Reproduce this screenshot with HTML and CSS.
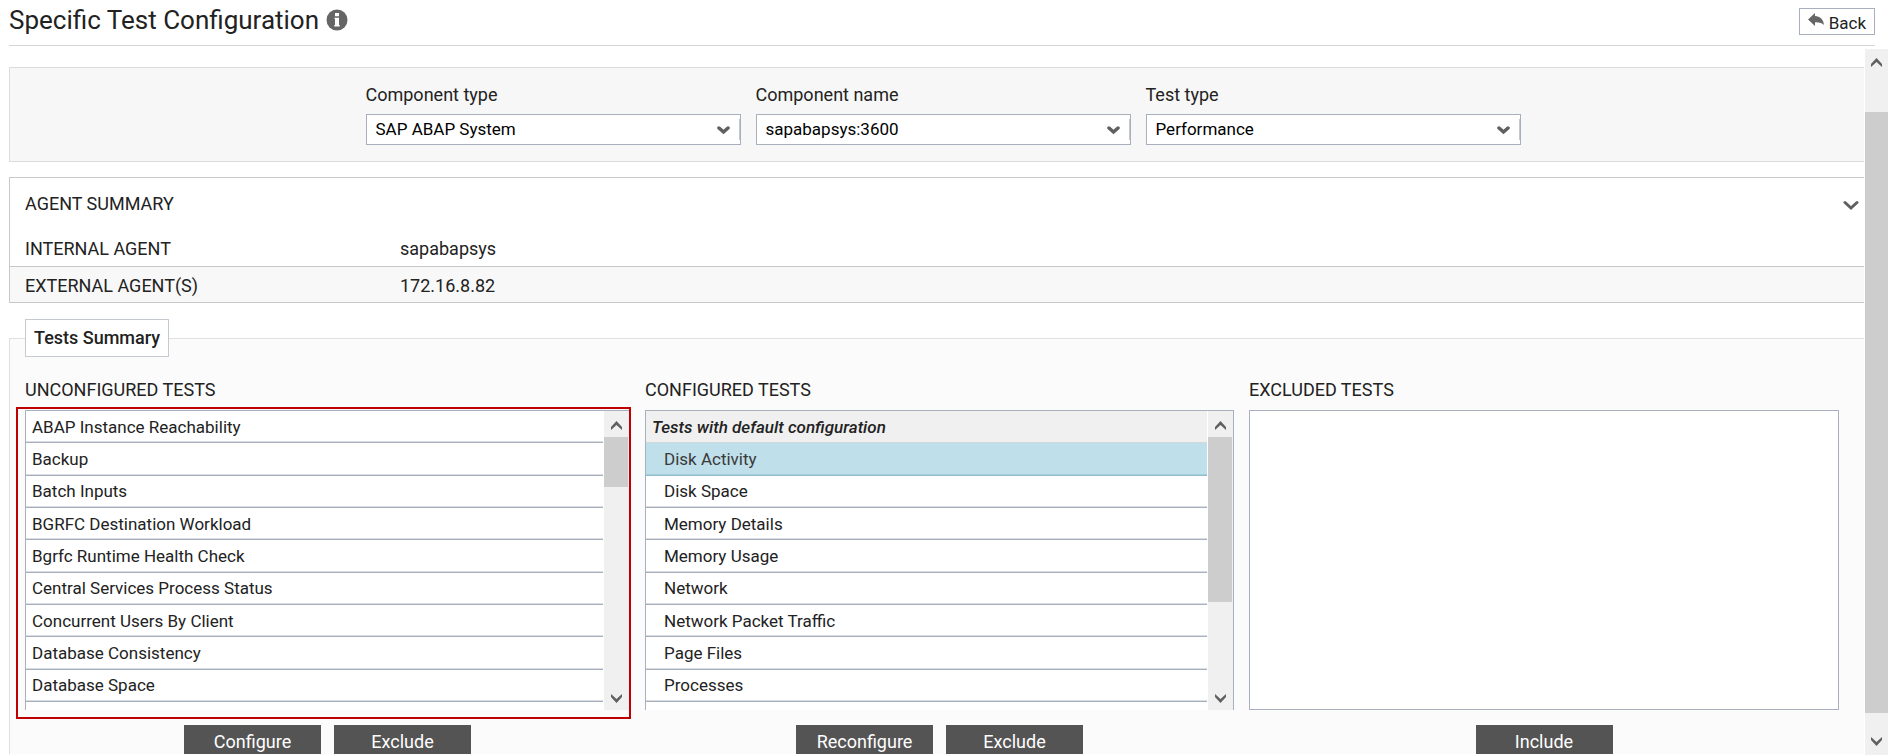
FILE: index.html
```
<!DOCTYPE html>
<html lang="en">
<head>
    <meta charset="UTF-8">
    <meta name="viewport" content="width=device-width, initial-scale=1.0">
    <title>Specific Test Configuration</title>
    <link rel="stylesheet" href="styles.css">
</head>
<body>
    <header class="page-header">
        <h1>Specific Test Configuration</h1>
        <svg class="info-icon" viewBox="0 0 22 22" width="22" height="22">
            <circle cx="11" cy="11" r="10.5" fill="#666"/>
            <path d="M9 4h4v3.300H9zM8.500 8.700H13V16h.7v1.500H8.300V16H9v-6h-.5z" fill="#fff"/>
        </svg>
        <button type="button" class="back-button">
            <svg viewBox="0 0 16 15" width="16" height="15">
                <path d="M0 6.500L7 0v3c5 .3 8.500 3.500 9 9-2-2-5-2.800-9-2.600V13z" fill="#666"/>
            </svg>
            <span>Back</span>
        </button>
    </header>

    <div class="page-body">
        <main class="content">
            <!-- Component filters -->
            <form class="filters">
                <div class="field">
                    <label for="component-type">Component type</label>
                    <select id="component-type">
                        <option>SAP ABAP System</option>
                    </select>
                    <svg class="select-arrow" viewBox="0 0 13 9" width="13" height="9"><path d="M2 2l4.500 4L11 2" fill="none" stroke="#606060" stroke-width="3.500" stroke-linecap="round"/></svg>
                </div>
                <div class="field">
                    <label for="component-name">Component name</label>
                    <select id="component-name">
                        <option>sapabapsys:3600</option>
                    </select>
                    <svg class="select-arrow" viewBox="0 0 13 9" width="13" height="9"><path d="M2 2l4.500 4L11 2" fill="none" stroke="#606060" stroke-width="3.500" stroke-linecap="round"/></svg>
                </div>
                <div class="field">
                    <label for="test-type">Test type</label>
                    <select id="test-type">
                        <option>Performance</option>
                    </select>
                    <svg class="select-arrow" viewBox="0 0 13 9" width="13" height="9"><path d="M2 2l4.500 4L11 2" fill="none" stroke="#606060" stroke-width="3.500" stroke-linecap="round"/></svg>
                </div>
            </form>

            <!-- Agent summary -->
            <section class="agents">
                <div class="agents-head">
                    <h2>AGENT SUMMARY</h2>
                    <button type="button" class="toggle" aria-label="Toggle agent summary">
                        <svg viewBox="0 0 16 11" width="16" height="11"><path d="M2 2.500L8 8l6-5.500" fill="none" stroke="#606060" stroke-width="3" stroke-linecap="round"/></svg>
                    </button>
                </div>
                <table>
                    <tr>
                        <th scope="row">INTERNAL AGENT</th>
                        <td>sapabapsys</td>
                    </tr>
                    <tr>
                        <th scope="row">EXTERNAL AGENT(S)</th>
                        <td>172.16.8.82</td>
                    </tr>
                </table>
            </section>

            <!-- Tests summary -->
            <fieldset class="tests">
                <legend>Tests Summary</legend>
                <div class="columns">
                    <section class="column">
                        <h2>UNCONFIGURED TESTS</h2>
                        <div class="list-box highlighted">
                            <ul>
                                <li>ABAP Instance Reachability</li>
                                <li>Backup</li>
                                <li>Batch Inputs</li>
                                <li>BGRFC Destination Workload</li>
                                <li>Bgrfc Runtime Health Check</li>
                                <li>Central Services Process Status</li>
                                <li>Concurrent Users By Client</li>
                                <li>Database Consistency</li>
                                <li>Database Space</li>
                            </ul>
                            <div class="scrollbar">
                                <svg viewBox="0 0 11 9" width="11" height="9"><path d="M0 6l5.500-6L11 6v3L5.500 4 0 9z" fill="#606060"/></svg>
                                <div class="track"><div class="thumb thumb-short"></div></div>
                                <svg viewBox="0 0 11 9" width="11" height="9"><path d="M0 3l5.500 6L11 3V0L5.500 5 0 0z" fill="#606060"/></svg>
                            </div>
                        </div>
                        <div class="actions">
                            <button type="button">Configure</button>
                            <button type="button">Exclude</button>
                        </div>
                    </section>

                    <section class="column">
                        <h2>CONFIGURED TESTS</h2>
                        <div class="list-box">
                            <ul class="grouped">
                                <li class="group">Tests with default configuration</li>
                                <li class="selected">Disk Activity</li>
                                <li>Disk Space</li>
                                <li>Memory Details</li>
                                <li>Memory Usage</li>
                                <li>Network</li>
                                <li>Network Packet Traffic</li>
                                <li>Page Files</li>
                                <li>Processes</li>
                            </ul>
                            <div class="scrollbar">
                                <svg viewBox="0 0 11 9" width="11" height="9"><path d="M0 6l5.500-6L11 6v3L5.500 4 0 9z" fill="#606060"/></svg>
                                <div class="track"><div class="thumb thumb-long"></div></div>
                                <svg viewBox="0 0 11 9" width="11" height="9"><path d="M0 3l5.500 6L11 3V0L5.500 5 0 0z" fill="#606060"/></svg>
                            </div>
                        </div>
                        <div class="actions">
                            <button type="button">Reconfigure</button>
                            <button type="button">Exclude</button>
                        </div>
                    </section>

                    <section class="column">
                        <h2>EXCLUDED TESTS</h2>
                        <div class="list-box empty"></div>
                        <div class="actions">
                            <button type="button">Include</button>
                        </div>
                    </section>
                </div>
            </fieldset>
        </main>

        <div class="scrollbar page-scrollbar">
            <svg viewBox="0 0 11 9" width="11" height="9"><path d="M0 6l5.500-6L11 6v3L5.500 4 0 9z" fill="#606060"/></svg>
            <div class="track"><div class="thumb thumb-page"></div></div>
            <svg viewBox="0 0 11 9" width="11" height="9"><path d="M0 3l5.500 6L11 3V0L5.500 5 0 0z" fill="#606060"/></svg>
        </div>
    </div>
</body>
</html>
```
FILE: styles.css
```
* {
    box-sizing: border-box;
}

body {
    margin: 0;
    height: 100vh;
    display: flex;
    flex-direction: column;
    overflow: hidden;
    background: #fff;
    color: #222;
    font-family: Roboto, sans-serif;
    font-size: 18px;
    line-height: 24px;
}

h1, h2 {
    margin: 0;
    font-weight: 400;
}

h2 {
    font-size: 18px;
}

button, select {
    font-family: inherit;
}

svg {
    display: block;
}

/* Header */
.page-header {
    display: flex;
    align-items: center;
    height: 46px;
    margin: 0 13px 3px 9px;
    padding-bottom: 5px;
    border-bottom: 1px solid #d5d5d5;
}

.page-header h1 {
    font-size: 26px;
    line-height: 32px;
}

.info-icon {
    margin-left: 7px;
}

.back-button {
    display: flex;
    align-items: center;
    gap: 5px;
    height: 27px;
    margin: 3px 0 0 auto;
    padding: 0 8px;
    border: 1px solid #a9b0bd;
    background: #fff;
    color: #222;
    font-size: 17px;
}

.back-button svg {
    margin-bottom: 2px;
}

.back-button span {
    padding-top: 2px;
}

.page-body {
    display: flex;
    flex: 1;
    min-height: 0;
}

.content {
    flex: 1;
    margin: 0 1px 1px 9px;
    padding-top: 18px;
    overflow: hidden;
}

/* Filters */
.filters {
    display: flex;
    justify-content: center;
    gap: 15px;
    height: 95px;
    padding: 15px 0 0 12px;
    border: 1px solid #dcdcdc;
    border-right: none;
    background: #f7f7f7;
}

.field {
    position: relative;
    width: 375px;
}

.field label {
    display: block;
    margin-bottom: 7px;
}

.field select {
    display: block;
    width: 100%;
    height: 31px;
    padding: 0 9px 2px;
    border: 1px solid #a9b0bd;
    border-radius: 0;
    background: #fff linear-gradient(#c4c8cc, #c4c8cc) right center / 1px 21px no-repeat;
    color: #000;
    font-size: 17px;
    appearance: none;
}

.select-arrow {
    position: absolute;
    right: 11px;
    bottom: 26px;
    pointer-events: none;
}

/* Agent summary */
.agents {
    margin-top: 15px;
    border: 1px solid #c8c8c8;
    border-right: none;
}

.agents-head {
    display: flex;
    justify-content: space-between;
    align-items: center;
    height: 52px;
    padding: 0 5px 0 15px;
}

.toggle {
    padding: 2px 0 0;
    border: none;
    background: none;
}

.agents table {
    width: 100%;
    border-collapse: collapse;
}

.agents th, .agents td {
    height: 36px;
    padding: 3px 0 0 15px;
    text-align: left;
    font-weight: 400;
}

.agents th {
    width: 375px;
}

.agents tr + tr {
    border-top: 1px solid #c8c8c8;
    background: #f8f8f8;
}

/* Tests summary */
.tests {
    min-width: 0;
    margin: 16px 0 0;
    padding: 21px 25px 20px 15px;
    border: 1px solid #e0e0e0;
    border-right: none;
    background: #fbfbfb;
}

.tests legend {
    padding: 6px 8px;
    border: 1px solid #c5cad0;
    background: #fff;
    font-weight: 500;
}

.columns {
    display: grid;
    grid-template-columns: 605fr 589fr 590fr;
    gap: 15px;
}

.column h2 {
    margin-bottom: 8px;
}

.list-box {
    position: relative;
    display: flex;
    height: 300px;
    border: 1px solid #a9b0bd;
    border-bottom: none;
    background: #fff;
}

.list-box.empty {
    border-bottom: 1px solid #a9b0bd;
}

.highlighted::after {
    content: "";
    position: absolute;
    inset: -4px -2px -9px -10px;
    border: 2px solid #c00000;
    pointer-events: none;
}

.list-box ul {
    flex: 1;
    display: grid;
    grid-template-rows: repeat(9, 1fr);
    margin: 0 1px 0 0;
    padding: 0 0 8px;
    list-style: none;
    font-size: 17px;
}

.list-box li {
    display: flex;
    align-items: center;
    padding-left: 6px;
    border-bottom: 1px solid #a9b0bd;
    box-shadow: inset 0 -1px #dadde1;
}

.list-box .grouped li {
    padding-left: 18px;
}

.list-box .grouped .group {
    padding-left: 6px;
    border-color: #d5d8da;
    background: #f0f0f0;
    box-shadow: none;
    font-weight: 500;
    font-style: italic;
}

.list-box .selected {
    border-color: #90bccd;
    background: #bfdfea;
    box-shadow: inset 0 -1px #a9cedb;
    color: #3a3a3a;
}

/* Scrollbars */
.scrollbar {
    display: flex;
    flex-direction: column;
    align-items: center;
    width: 25px;
    padding: 10px 0 7px;
    background: #f0f0f0;
}

.track {
    flex: 1;
    width: 100%;
    margin: 7px 0;
    padding-right: 1px;
}

.thumb {
    background: #cdcdcd;
}

.thumb-short {
    height: 20%;
}

.thumb-long {
    height: 66%;
}

.page-scrollbar {
    width: 23px;
    padding: 9px 0;
}

.page-scrollbar .track {
    padding: 38px 0 17px;
}

.thumb-page {
    height: 100%;
}

.actions {
    display: flex;
    justify-content: center;
    gap: 13px;
    margin-top: 15px;
}

.actions button {
    width: 137px;
    height: 32px;
    padding: 0;
    border: none;
    background: #545454;
    color: #fff;
    font-size: 18px;
}
```
